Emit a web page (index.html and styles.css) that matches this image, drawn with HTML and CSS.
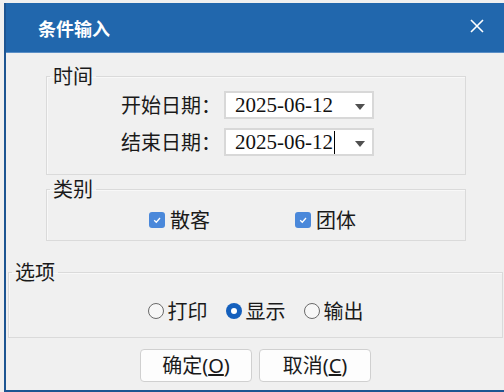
FILE: index.html
```html
<!DOCTYPE html>
<html lang="zh-CN">
<head>
    <meta charset="UTF-8">
    <title>条件输入</title>
    <link rel="stylesheet" href="styles.css">
</head>
<body>
    <div class="window">
        <div class="titlebar">
            <span class="title">条件输入</span>
            <svg class="close" width="14" height="14" viewBox="0 0 14 14">
                <path d="M1 1 L13 13 M13 1 L1 13" stroke="#fff" stroke-width="1.6" fill="none"/>
            </svg>
        </div>

        <fieldset class="group group-time">
            <legend>时间</legend>
            <div class="rows">
                <div class="row">
                    <label class="row-label">开始日期：</label>
                    <div class="date-box">
                        <span class="date-text">2025-06-12</span>
                        <span class="arrow"></span>
                    </div>
                </div>
                <div class="row">
                    <label class="row-label">结束日期：</label>
                    <div class="date-box">
                        <span class="date-text">2025-06-12</span><span class="caret"></span>
                        <span class="arrow"></span>
                    </div>
                </div>
            </div>
        </fieldset>

        <fieldset class="group group-type">
            <legend>类别</legend>
            <div class="checks">
                <label class="check-item"><span class="check"><svg width="10" height="10" viewBox="0 0 10 10"><path d="M2.2 5.2 L4.3 7.2 L8 3" stroke="#fff" stroke-width="1.3" fill="none"/></svg></span>散客</label>
                <label class="check-item"><span class="check"><svg width="10" height="10" viewBox="0 0 10 10"><path d="M2.2 5.2 L4.3 7.2 L8 3" stroke="#fff" stroke-width="1.3" fill="none"/></svg></span>团体</label>
            </div>
        </fieldset>

        <fieldset class="group group-opts">
            <legend>选项</legend>
            <div class="radios">
                <label class="radio-item"><span class="radio"></span>打印</label>
                <label class="radio-item"><span class="radio on"></span>显示</label>
                <label class="radio-item"><span class="radio"></span>输出</label>
            </div>
        </fieldset>

        <div class="buttons">
            <button class="btn">确定<span class="key">(<u>O</u>)</span></button>
            <button class="btn">取消<span class="key">(<u>C</u>)</span></button>
        </div>
    </div>
</body>
</html>
```

FILE: styles.css
```css
* {
    box-sizing: border-box;
}
body {
    margin: 0;
    width: 504px;
    height: 392px;
    overflow: hidden;
    background: #f0f0f0;
    font-family: 'Noto Sans', 'Noto Sans CJK SC', sans-serif;
    color: #1a1a1a;
}
.window {
    margin: 3px 0 0 4px;
    width: 520px;
    height: 389px;
    background: #f0f0f0;
    border-left: 2px solid #1d5592;
    border-bottom: 2px solid #1d5592;
}
.titlebar {
    height: 50px;
    background: #2167ad;
    border-bottom: 1px solid #5b8fc6;
    display: flex;
    align-items: center;
    padding-left: 32px;
}
.title {
    color: #fff;
    font-family: 'Noto Sans CJK SC', sans-serif;
    font-size: 18px;
    font-weight: 700;
    line-height: 24px;
}
.close {
    margin-left: 360px;
    margin-top: -3px;
}
.group {
    margin: 0;
    padding: 0;
    border: 1px solid #dadada;
    box-shadow: inset 1px 1px 0 #f8f8f8;
}
.group legend {
    font-family: 'Noto Sans CJK SC', sans-serif;
    font-size: 20px;
    line-height: 24px;
    padding: 0 3px;
    margin-left: 3px;
}
.group-time {
    margin: 11px 0 0 40px;
    width: 420px;
    padding: 3px 0 18px;
}
.rows {
    display: flex;
    flex-direction: column;
    gap: 9px;
}
.row {
    display: flex;
    align-items: center;
    height: 28px;
    padding-left: 74px;
}
.row-label {
    width: 100px;
    font-family: 'Noto Sans CJK SC', sans-serif;
    font-size: 20px;
    line-height: 24px;
    margin-right: 3px;
}
.date-box {
    width: 150px;
    height: 28px;
    background: #fff;
    border: 2px solid #d8d8d8;
    display: flex;
    align-items: center;
    padding-left: 9px;
    position: relative;
}
.date-text {
    font-family: 'Liberation Serif', serif;
    font-size: 21px;
    line-height: 24px;
    color: #111;
}
.caret {
    display: inline-block;
    width: 1px;
    height: 23px;
    background: #000;
    margin-left: 1px;
}
.arrow {
    position: absolute;
    right: 7px;
    top: 11px;
    width: 0;
    height: 0;
    border-left: 5.5px solid transparent;
    border-right: 5.5px solid transparent;
    border-top: 6px solid #505050;
}
.group-type {
    margin: 2px 0 0 40px;
    width: 420px;
    padding: 7px 0 8px;
}
.checks {
    display: flex;
    padding-left: 102px;
    gap: 85px;
    height: 24px;
    align-items: center;
}
.check-item,
.radio-item {
    display: flex;
    align-items: center;
    font-family: 'Noto Sans CJK SC', sans-serif;
    font-size: 20px;
    line-height: 24px;
}
.check {
    width: 16px;
    height: 16px;
    border-radius: 3px;
    background: #4a88da;
    display: inline-flex;
    align-items: center;
    justify-content: center;
    margin-right: 5px;
}
.group-opts {
    margin: 19px 0 0 2px;
    width: 495px;
    padding: 15px 0 14px;
}
.radios {
    display: flex;
    justify-content: center;
    gap: 18px;
    height: 24px;
    align-items: center;
}
.radio {
    width: 16px;
    height: 16px;
    border-radius: 50%;
    border: 1px solid #6a6a6a;
    background: #f7f7f7;
    margin-right: 4px;
    position: relative;
}
.radio.on {
    border: none;
    background: #1560bd;
}
.radio.on::after {
    content: '';
    position: absolute;
    left: 5px;
    top: 5px;
    width: 6px;
    height: 6px;
    border-radius: 50%;
    background: #fff;
}
.buttons {
    margin: 11px 0 0 2px;
    width: 495px;
    display: flex;
    justify-content: center;
    gap: 7px;
}
.btn {
    width: 112px;
    height: 33px;
    background: #fdfdfd;
    border: 1px solid #d0d0d0;
    border-radius: 4px;
    font-family: 'Noto Sans CJK SC', sans-serif;
    font-size: 20px;
    line-height: 24px;
    color: #1a1a1a;
    padding: 0;
}
.key {
    font-family: 'Noto Sans', sans-serif;
}
```
